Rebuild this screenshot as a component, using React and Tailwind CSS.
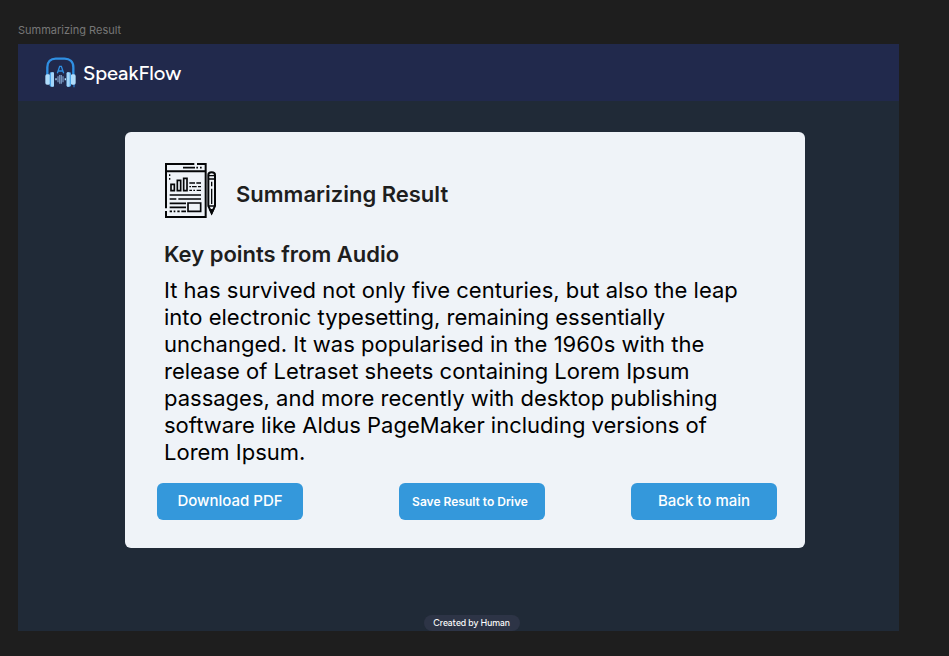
function LogoIcon() {
  return (
    <svg className="h-[31px] w-[31px]" viewBox="0 0 93 93" fill="none" aria-hidden="true">
      <path d="M7 54V31C7 14 17 5 32 5h27c15 0 26 9 26 26v23" stroke="#2f8fe3" strokeWidth="7" />
      <path d="M87 76v15" stroke="#2678c8" strokeWidth="4" />
      <rect x="1" y="52" width="15" height="31" rx="5" fill="#b0dcfb" />
      <rect x="14" y="46" width="13" height="43" rx="4" fill="#4aa3e8" />
      <rect x="18" y="46" width="9" height="43" rx="3" fill="#a4d6fa" />
      <rect x="77" y="52" width="15" height="31" rx="5" fill="#b0dcfb" />
      <rect x="65" y="46" width="13" height="43" rx="4" fill="#4aa3e8" />
      <rect x="65" y="46" width="9" height="43" rx="3" fill="#a4d6fa" />
      <path d="M37 49l7-21h5l7 21M40 42h13" stroke="#2f8fe3" strokeWidth="4" />
      <path d="M33 64v6M61 64v6" stroke="#b0dcfb" strokeWidth="4" />
      <path d="M39 58v18M44 54v26M49 54v26M54 58v18" stroke="#7391ba" strokeWidth="4" />
    </svg>
  );
}

function ReportIcon() {
  return (
    <svg className="h-[55px] w-[52px] shrink-0" viewBox="30 24 156 165" fill="none" stroke="#050608" strokeWidth="6" aria-hidden="true">
      <path d="M118 27H33v133M33 168v18h119V27h-26" />
      <path d="M33 49h119" />
      <path d="M84 38h36M124 38h5M135 38h5" strokeWidth="5" />
      <path d="M44 58v5M44 69v5" strokeWidth="4" />
      <path d="M48 88h10v19H48zM67 76h10v31H67zM86 70h10v37H86z" strokeWidth="5" />
      <path d="M103 84h17M124 84h14M103 95h5M111 95h14M129 95h9M103 106h8M115 106h5M125 106h13" strokeWidth="4" />
      <path d="M44 120h94M44 132h20M70 132h68M44 145h49M44 157h49M44 169h7M56 169h5M67 169h7M79 169h14" strokeWidth="5" />
      <path d="M99 144h38v25H99z" strokeWidth="5" />
      <path d="M160 153V60c0-5 4-8 10-8s10 3 10 8v93l-10 21z" />
      <path d="M160 62h20M160 72h20M160 153h20" strokeWidth="4" />
      <path d="M170 80v14M170 101v46" strokeWidth="4" />
      <path d="M166 165h8l-4 9z" fill="#050608" />
    </svg>
  );
}

const buttonBase = "h-[37px] w-[146px] rounded-md bg-[#3498db] text-center text-white";

export default function App() {
  return (
    <div className="min-h-screen bg-[#1e1e1e] pt-[22px] pr-[50px] pb-[25px] pl-[18px] font-['Inter',sans-serif]">
      <p className="h-[22px] text-[11px] leading-4 text-[#777777]">Summarizing Result</p>
      <div className="flex flex-col bg-[#202a37]">
        <header className="flex h-[57px] items-center gap-[7px] bg-[#21294c] pl-[27px] text-white">
          <LogoIcon />
          <span className="font-['Figtree','Lato',sans-serif] text-[20px] leading-7 font-medium">SpeakFlow</span>
        </header>
        <main className="pt-[31px] pr-[94px] pb-[67px] pl-[107px]">
          <section className="rounded-md bg-[#eff3f8] pt-[31px] pr-7 pb-7 pl-8">
            <div className="pl-[7px]">
              <div className="flex items-center gap-[19px] pl-px">
                <ReportIcon />
                <h1 className="pt-[6px] text-[22px] leading-7 font-semibold text-[#1e1e1e]">Summarizing Result</h1>
              </div>
              <h2 className="mt-[22px] text-[22px] leading-7 font-semibold text-[#1e1e1e]">Key points from Audio</h2>
              <p className="mt-[9px] max-w-[580px] text-[22px] leading-[27px] text-black">
                It has survived not only five centuries, but also the leap into electronic typesetting, remaining
                essentially unchanged. It was popularised in the 1960s with the release of Letraset sheets containing
                Lorem Ipsum passages, and more recently with desktop publishing software like Aldus PageMaker including
                versions of Lorem Ipsum.
              </p>
            </div>
            <div className="mt-[17px] flex justify-between">
              <div className="flex gap-24">
                <button type="button" className={`${buttonBase} text-[15px] font-medium`}>Download PDF</button>
                <button type="button" className={`${buttonBase} pr-1 text-[12px] font-semibold`}>
                  Save Result to Drive
                </button>
              </div>
              <button type="button" className={`${buttonBase} text-[15px] font-medium`}>Back to main</button>
            </div>
          </section>
        </main>
        <footer className="flex justify-center pl-[26px]">
          <span className="w-24 rounded-full bg-[#2d3446] text-center font-['Figtree','Lato',sans-serif] text-[9px] leading-4 font-medium text-white">
            Created by Human
          </span>
        </footer>
      </div>
    </div>
  );
}
